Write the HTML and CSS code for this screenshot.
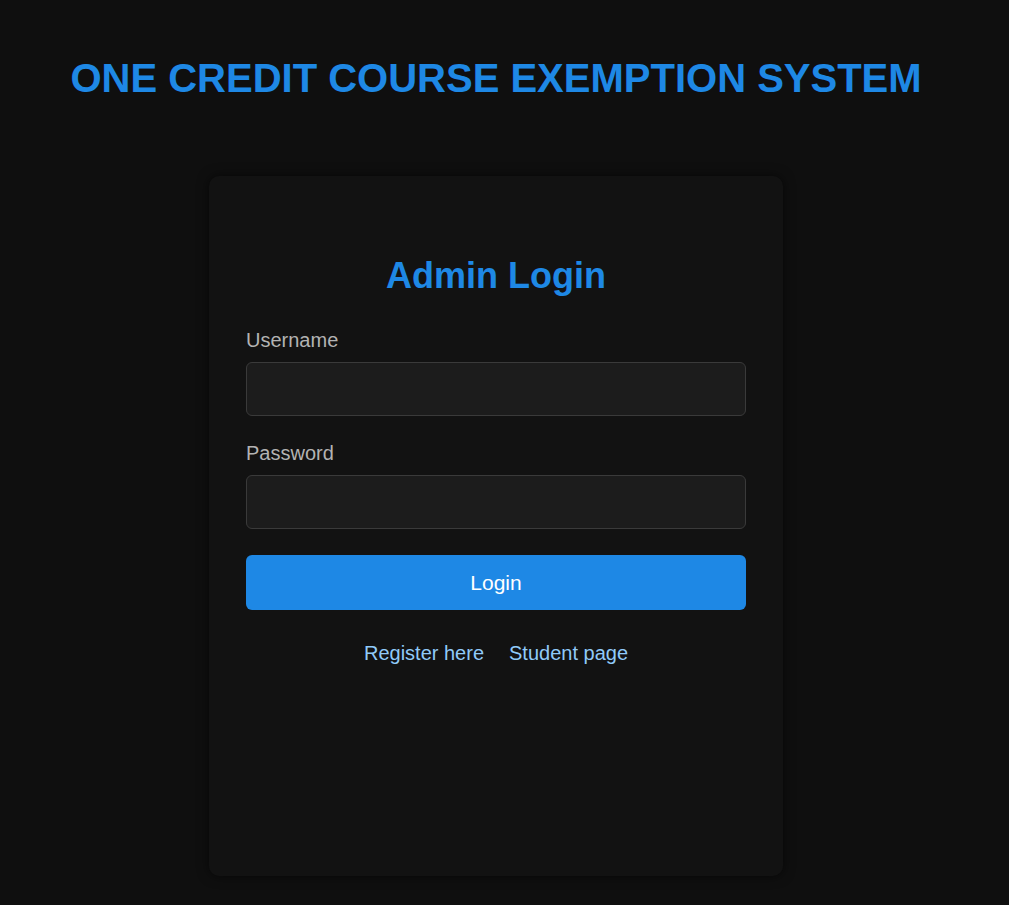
FILE: index.html
```html
<!DOCTYPE html>
<html>
<head>
<meta charset="utf-8">
<link rel="stylesheet" href="styles.css">
</head>
<body>
<div class="page">
  <h1 class="site-title">ONE CREDIT COURSE EXEMPTION SYSTEM</h1>
  <div class="card">
    <h2 class="card-title">Admin Login</h2>
    <form class="form">
      <label class="label" for="u">Username</label>
      <input class="input" id="u" type="text">
      <label class="label" for="p">Password</label>
      <input class="input" id="p" type="password">
      <button class="btn" type="button">Login</button>
    </form>
    <div class="links">
      <a class="link" href="#">Register here</a>
      <a class="link" href="#">Student page</a>
    </div>
  </div>
</div>
</body>
</html>
```
FILE: styles.css
```css
html, body {
  margin: 0;
  padding: 0;
  background: #0f0f0f;
  font-family: "Liberation Sans", Arial, sans-serif;
}
.page {
  display: flex;
  flex-direction: column;
  align-items: center;
  padding-right: 17px;
  min-height: 905px;
  box-sizing: border-box;
}
.site-title {
  margin: 54px 0 0;
  font-size: 40px;
  font-weight: 700;
  color: #1e88e5;
  line-height: 48px;
}
.card {
  margin-top: 74px;
  width: 574px;
  min-height: 700px;
  box-sizing: border-box;
  padding: 78px 37px 40px;
  background: #121212;
  border-radius: 10px;
  box-shadow: 0 0 12px rgba(0,0,0,0.6);
}
.card-title {
  margin: 0 0 30px;
  text-align: center;
  font-size: 36px;
  font-weight: 700;
  color: #1e88e5;
  line-height: 44px;
}
.form {
  display: flex;
  flex-direction: column;
}
.label {
  font-size: 20px;
  color: #b3b3b3;
  line-height: 24px;
  margin-bottom: 10px;
}
.input {
  height: 54px;
  box-sizing: border-box;
  background: #1c1c1c;
  border: 1px solid #3a3a3a;
  border-radius: 6px;
  margin: 0 0 25px;
  color: #eee;
  font-size: 18px;
  padding: 0 12px;
}
.btn {
  height: 55px;
  margin-top: 1px;
  background: #1e88e5;
  border: none;
  border-radius: 6px;
  color: #fff;
  font-family: "Liberation Sans", Arial, sans-serif;
  font-size: 21px;
}
.links {
  display: flex;
  justify-content: center;
  gap: 25px;
  margin-top: 31px;
}
.link {
  color: #90caf9;
  text-decoration: none;
  font-size: 20px;
  line-height: 24px;
}
```
